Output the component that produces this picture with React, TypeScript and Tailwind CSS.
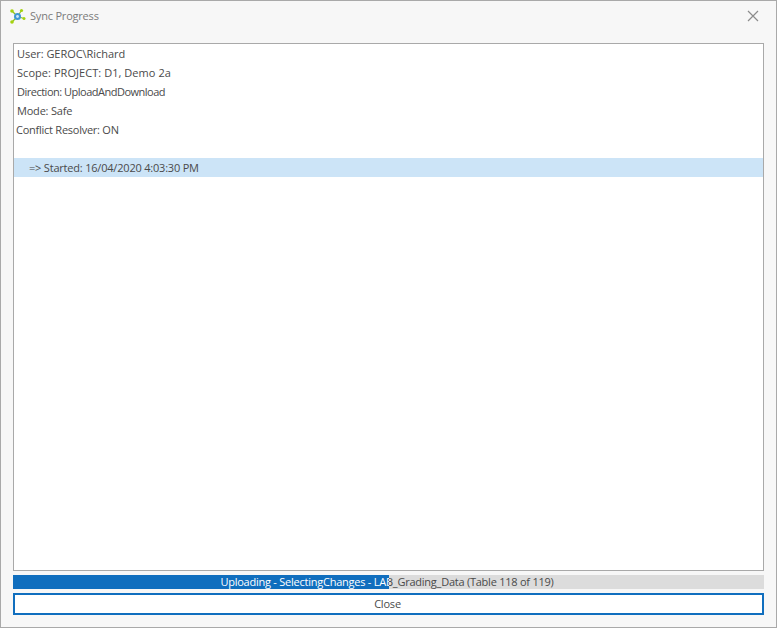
import React from 'react';

const lines = [
  { text: 'User: GEROC\\Richard', cls: 'pl-[3px] tracking-[-0.05px]' },
  { text: 'Scope: PROJECT: D1, Demo 2a', cls: 'pl-[3px] tracking-[0.05px]' },
  { text: 'Direction: UploadAndDownload', cls: 'pl-[3px] tracking-[-0.5px]' },
  { text: 'Mode: Safe', cls: 'pl-[3px]' },
  { text: 'Conflict Resolver: ON', cls: 'pl-[2px] tracking-[-0.25px]' },
  { text: '', cls: 'pl-[3px]' },
  { text: '=> Started: 16/04/2020 4:03:30 PM', cls: 'pl-[15px] bg-[#cce4f7]' },
];

const progressText = 'Uploading - SelectingChanges - LAB_Grading_Data (Table 118 of 119)';

const AppIcon = () => (
  <svg width="17" height="17" viewBox="0 0 17 17" className="shrink-0">
    <g stroke="#8fc31f" strokeWidth="1.2">
      <line x1="8.5" y1="8.5" x2="3" y2="3" />
      <line x1="8.5" y1="8.5" x2="12.5" y2="2.5" />
      <line x1="8.5" y1="8.5" x2="15" y2="10.5" />
      <line x1="8.5" y1="8.5" x2="3" y2="14" />
    </g>
    <circle cx="3" cy="3" r="1.8" fill="#a5d20f" />
    <circle cx="12.5" cy="2.5" r="1.6" fill="#a5d20f" />
    <circle cx="15" cy="10.5" r="1.5" fill="#a5d20f" />
    <circle cx="3" cy="14" r="1.8" fill="#a5d20f" />
    <circle cx="8.5" cy="8.5" r="3.5" fill="#3f97d3" />
    <circle cx="8.5" cy="8.5" r="1.4" fill="#cfe8f7" />
  </svg>
);

export default function App() {
  return (
    <div className="w-[777px] h-[628px] flex flex-col border border-[#a9a9a9] bg-[#f7f7f7] text-[11px] tracking-[-0.2px] text-[#4a4a4a] font-['Open_Sans','Noto_Sans',sans-serif] overflow-hidden">
      {/* title bar */}
      <div className="h-[42px] shrink-0 flex items-start justify-between pl-[8px] pr-[17px] pt-[7px]">
        <div className="flex items-center gap-[4px]">
          <AppIcon />
          <span className="text-[#7b7b7b]">Sync Progress</span>
        </div>
        <svg width="12" height="12" viewBox="0 0 12 12" className="mt-[2px]">
          <path d="M1 1 L11 11 M11 1 L1 11" stroke="#8c8c8c" strokeWidth="1.2" fill="none" />
        </svg>
      </div>

      <div className="flex-1 flex flex-col px-[12px] pb-[12px]">
        {/* log list */}
        <div className="h-[528px] border border-[#a9a9a9] bg-white">
          {lines.map((l, i) => (
            <div key={i} className={`h-[19px] leading-[19px] whitespace-nowrap ${l.cls}`}>
              {l.text}
            </div>
          ))}
        </div>

        {/* progress */}
        <div className="relative mt-[4px] h-[14px] pr-[3px] bg-[#dcdcdc] leading-[14px] tracking-[-0.24px] text-center whitespace-nowrap">
          <span aria-hidden="true">{progressText}</span>
          <div className="absolute left-0 top-0 h-[14px] w-[376px] overflow-hidden bg-[#106ebe] text-white">
            <div className="w-[751px] pr-[3px] text-center">{progressText}</div>
          </div>
        </div>

        <button className="mt-[4px] h-[22px] pr-[2px] border-2 border-[#106ebe] bg-white leading-[18px] text-center text-[#4a4a4a]">
          Close
        </button>
      </div>
    </div>
  );
}
